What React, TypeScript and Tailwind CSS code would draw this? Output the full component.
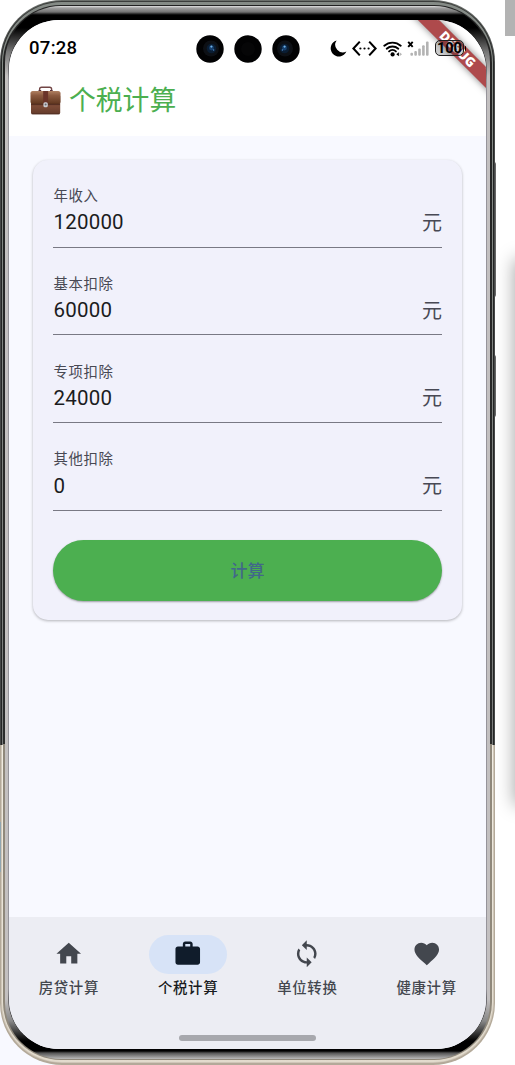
import React from "react";
import { MdFavorite, MdHome, MdSync, MdWork } from "react-icons/md";

const fields = [
  { label: "年收入", value: "120000" },
  { label: "基本扣除", value: "60000" },
  { label: "专项扣除", value: "24000" },
  { label: "其他扣除", value: "0" },
];

const tabs = [
  { label: "房贷计算", icon: MdHome },
  { label: "个税计算", icon: MdWork, active: true },
  { label: "单位转换", icon: MdSync },
  { label: "健康计算", icon: MdFavorite },
];

const Camera = ({ lens, flip }: { lens?: boolean; flip?: boolean }) => (
  <svg width="28" height="28" viewBox="0 0 28 28" className={flip ? "-scale-x-100" : ""}>
    <circle cx="14" cy="14" r="13.7" fill="#020203" />
    {lens ? (
      <>
        <circle cx="15" cy="13.5" r="8" fill="#0d1015" />
        <circle cx="15.5" cy="13.5" r="4.8" fill="#0a1d33" />
        <circle cx="15.5" cy="13" r="2.4" fill="#17406e" />
        <circle cx="15.4" cy="11.6" r="1.1" fill="#6fb2ea" />
        <circle cx="17.6" cy="15" r="0.8" fill="#4d87c5" />
      </>
    ) : (
      <circle cx="14" cy="14" r="7" fill="#060607" />
    )}
  </svg>
);

const StatusIcons = () => (
  <div className="flex items-center">
    <svg width="17" height="17" viewBox="0 0 17 17">
      <path d="M6.6.4A8.2 8.2 0 1 0 16.4 11.6 7.7 7.7 0 0 1 6.6.4Z" fill="#000" />
    </svg>
    <svg width="25" height="17" viewBox="0 0 25 17" className="ml-[5px]">
      <path d="M7.8 1.6 1.4 8.5l6.4 6.9M17.2 1.6l6.4 6.9-6.4 6.9" fill="none" stroke="#000" strokeWidth="2.1" />
      <circle cx="8.4" cy="8.5" r="1.1" />
      <circle cx="12.5" cy="8.5" r="1.1" />
      <circle cx="16.6" cy="8.5" r="1.1" />
    </svg>
    <svg width="20" height="17" viewBox="0 0 20 17" className="ml-[5.5px]">
      <g fill="none" stroke="#000" strokeWidth="1.9" strokeLinecap="round">
        <path d="M1.3 5.7a12.4 12.4 0 0 1 16.4 0" />
        <path d="M3.7 8.7a8.8 8.8 0 0 1 11.6 0" />
        <path d="M6.1 11.4a5 5 0 0 1 6.8 0" />
      </g>
      <circle cx="9.6" cy="14.4" r="2.1" />
      <path d="m13.3 14.2 2.6-2v4z" />
      <path d="m19 14.2-2.4-2v4z" fill="#b5b5b5" />
    </svg>
    <svg width="23" height="17" viewBox="0 0 23 17" className="ml-[4px]">
      <path d="m1.2 1.8 4.5 5M5.7 1.8l-4.5 5" stroke="#000" strokeWidth="1.9" />
      <g fill="#b3b3b3">
        <rect x="3.4" y="12.7" width="2.6" height="3" rx="1" />
        <rect x="7.3" y="11" width="2.6" height="4.7" rx="1" />
        <rect x="11.2" y="8.6" width="2.6" height="7.1" rx="1" />
        <rect x="15.1" y="5.3" width="2.6" height="10.4" rx="1" />
        <rect x="19" y="1.6" width="2.6" height="14.1" rx="1" />
      </g>
    </svg>
    <div className="ml-[5px] flex h-4 w-[29px] items-center justify-center rounded-[5px] border-[1.5px] border-[#1d1d1d] bg-black/20 pt-[2px] font-['Roboto'] text-[14.5px] font-bold leading-none text-black">
      100
    </div>
    <div className="ml-px h-[5px] w-[1.5px] rounded-r bg-black" />
  </div>
);

const Briefcase = () => (
  <svg width="31" height="29" viewBox="0 0 31 29">
    <defs>
      <linearGradient id="flap" x1="0" y1="0" x2="0" y2="1">
        <stop offset="0" stopColor="#b08062" />
        <stop offset="0.35" stopColor="#8b5a40" />
        <stop offset="1" stopColor="#60371f" />
      </linearGradient>
      <linearGradient id="body" x1="0" y1="0" x2="0" y2="1">
        <stop offset="0" stopColor="#5a3428" />
        <stop offset="0.6" stopColor="#7b4a36" />
        <stop offset="1" stopColor="#643b2b" />
      </linearGradient>
    </defs>
    <path d="M9.6 5.4V3.2c0-1.4.7-2 2-2h8c1.3 0 2 .6 2 2v2.2" fill="none" stroke="#714545" strokeWidth="1.4" />
    <path d="M8.6 4.7h2.6M20 4.7h2.6" stroke="#55303a" strokeWidth="1.6" />
    <rect x="1" y="9" width="29.2" height="19.2" rx="1.6" fill="url(#body)" />
    <path d="M2.6 5h25.8c1.3 0 2.1 1 2.1 2.2v8.4c0 1.5-.8 2.3-2.2 2.3H2.7c-1.4 0-2.2-.8-2.2-2.3V7.2C.5 6 1.3 5 2.6 5Z" fill="url(#flap)" />
    <path d="M1 18.3h29" stroke="#4b281d" strokeWidth=".9" />
    <rect x="13.2" y="5" width="4.9" height="13" fill="#6a3429" />
    <rect x="13.4" y="16.3" width="4.4" height="5" rx="1.6" fill="#c9cbd0" />
    <circle cx="15.6" cy="18.6" r="1" fill="#686a70" />
    <path d="M1.5 27.8h28.2" stroke="#4c2c22" strokeWidth=".8" />
  </svg>
);

const Field = ({ label, value }: { label: string; value: string }) => (
  <div className="flex h-[68.4px] flex-col border-b border-[#797984] pt-[5.8px]">
    <span className="h-5 pl-[0.5px] text-[14.4px] leading-5 tracking-[0.65px] text-[#484954]">{label}</span>
    <div className="mt-[2.7px] flex h-7 items-center justify-between text-[20px] leading-7">
      <span className="pl-[0.5px] pt-px font-['Roboto'] text-[20.5px] tracking-[0.2px] text-[#1b1c21]">{value}</span>
      <span className="text-[#484954]">元</span>
    </div>
  </div>
);

const Screen = () => (
  <div className="relative flex h-[1029px] w-[477px] flex-col overflow-hidden rounded-[50px] bg-[#f8f9ff]">
    <div className="absolute left-[378.5px] top-[22px] flex h-[15px] w-[140px] rotate-45 items-center justify-center bg-[#ae4a4c] pr-px font-['Noto_Sans'] text-[13px] font-black text-white shadow-[0_0_7px_rgba(0,0,0,0.5)]">
      DEBUG
    </div>
    <header className="h-[116px] shrink-0 bg-white">
      <div className="relative flex h-[56px] items-center pl-5">
        <span className="w-[58px] pt-[2px] font-['Roboto'] text-[18.5px] font-medium tracking-[0.3px] text-black">07:28</span>
        <div className="ml-[108.5px] mr-[30.5px] flex gap-[10.2px] pt-px">
          <Camera lens />
          <Camera />
          <Camera lens flip />
        </div>
        <StatusIcons />
      </div>
      <div className="flex h-[48px] items-center gap-[8px] pl-[21px]">
        <Briefcase />
        <h1 className="-mt-px text-[26.8px] leading-none text-[#4caf50]">个税计算</h1>
      </div>
    </header>
    <main className="flex-1 px-6 pt-[24px]">
      <div className="rounded-[15px] bg-[#f1f1fb] px-5 pb-[19px] pt-[19.3px] shadow-[0_1px_3px_rgba(0,0,0,0.28)]">
        <div className="flex flex-col gap-[19.4px]">
          {fields.map((field) => (
            <Field key={field.label} {...field} />
          ))}
        </div>
        <button className="mt-[29.3px] flex h-[61px] w-full items-center justify-center rounded-full bg-[#4caf50] pb-[2px] text-[17px] font-medium text-[#41688a] shadow-[0_1px_2px_rgba(0,0,0,0.35)]">
          计算
        </button>
      </div>
    </main>
    <nav className="flex h-[132px] shrink-0 flex-col items-center bg-[#ecedf3]">
      <div className="grid w-full grid-cols-4 pt-[17.5px]">
        {tabs.map(({ label, icon: Icon, active }) => (
          <div key={label} className={active ? "flex flex-col items-center text-[#181b20]" : "flex flex-col items-center text-[#43474e]"}>
            <div className={active ? "flex h-[39px] w-[78px] items-center justify-center rounded-full bg-[#d7e3f7] text-[#101c2b]" : "flex h-[39px] w-[78px] items-center justify-center"}>
              <Icon size={29.5} />
            </div>
            <span className="mt-[3px] pl-[0.5px] text-[14.4px] font-medium leading-5 tracking-[0.65px]">{label}</span>
          </div>
        ))}
      </div>
      <div className="mt-[38.5px] h-[6px] w-[137px] rounded-full bg-[#a7a8ad]" />
    </nav>
  </div>
);

export default function App() {
  return (
    <div
      className="relative h-[1065px] w-[515px] overflow-hidden bg-[linear-gradient(#fff_0_1000px,#f8f9ff_1000px)] font-['Noto_Sans_CJK_SC',sans-serif]"
      lang="zh-CN"
    >
      {/* windows peeking in from the right */}
      <div className="absolute left-[400px] top-0 h-full w-[115px] bg-white" />
      <div className="absolute left-[505px] top-0 h-9 w-[10px] bg-[#b3b3b3]" />
      <div className="absolute left-[517px] top-[262px] h-[540px] w-5 shadow-[0_0_18px_3px_rgba(0,0,0,0.34)]" />
      {/* side buttons */}
      <div className="absolute left-[494px] top-[162px] h-[135px] w-[2px] rounded-r bg-[#666]" />
      <div className="absolute left-[494px] top-[355px] h-[62px] w-[2px] rounded-r bg-[#666]" />

      {/* metal rim, dark on the upper part and sand coloured below */}
      <div className="relative w-[495px] rounded-[62px] bg-[linear-gradient(#6b6f6b_0,#454747_70px_745px,#b3a999_745px)] px-px pt-px pb-[2px]">
        <div className="rounded-[61px] bg-[linear-gradient(#3b3d3b_0,#242525_60px_744px,#cfc6b8_744px)] px-px pt-px pb-px">
          <div className="rounded-[60px] bg-[linear-gradient(#858b86_0,#7b7d7c_743px,#f1ede3_743px,#e2dbcd_100%)] px-px pt-[3px] pb-[2px]">
            <div className="rounded-[58px] bg-[linear-gradient(#222_0,#2b2c2c_739px,#8f887b_739px)] px-[2px] pt-px pb-px">
              <div className="rounded-[56px] bg-[linear-gradient(#e2e2e2_0,#a0a0a0_2px,#747474_6px,#222_8px,#000_9px_22px,#777_46px,#c3c0c0_70px_calc(100%_-_60px),#888_calc(100%_-_38px),#000_calc(100%_-_18px)_calc(100%_-_8px),#555_calc(100%_-_6px),#bbb_100%)] px-[3px] pt-[14px] pb-[10px]">
                <div className="rounded-[51px] bg-[linear-gradient(#000_24px,#96949a_60px_calc(100%_-_60px),#000_calc(100%_-_24px))] px-px">
                  <Screen />
                </div>
              </div>
            </div>
          </div>
        </div>
      </div>
      <div className="absolute left-0 top-[822px] h-[50px] w-px bg-[#8fa5b0]" />
    </div>
  );
}
